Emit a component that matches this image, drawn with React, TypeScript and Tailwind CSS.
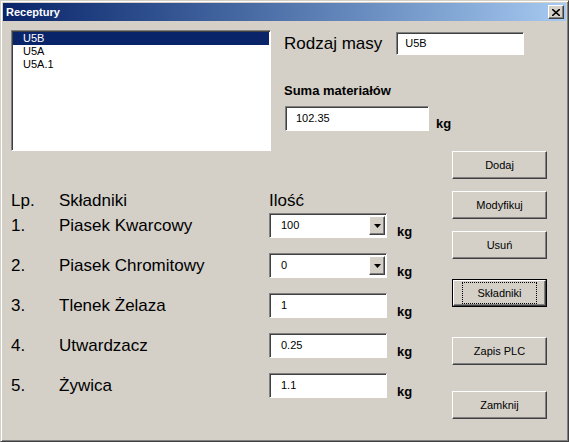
import React from "react";

const sunken = "bg-white border border-t-[#808080] border-l-[#808080] border-b-white border-r-white shadow-[inset_1px_1px_0_#404040]";
const raised = "bg-[#d4d0c8] border border-t-white border-l-white border-b-[#404040] border-r-[#404040] shadow-[inset_-1px_-1px_0_#808080]";

function Btn({ label, mt, focus }: { label: string; mt: string; focus?: boolean }) {
  return (
    <div className={`${mt} w-[95px] h-[28px] ${focus ? "border border-black" : ""}`}>
      <div className={`${raised} w-full h-full flex items-center justify-center text-[11px] text-black`}>
        <span className={focus ? "outline-1 outline-dotted outline-black px-[14px] py-[2px]" : ""}>{label}</span>
      </div>
    </div>
  );
}

function Row({ n, name, val, combo }: { n: string; name: string; val: string; combo?: boolean }) {
  return (
    <div className="flex h-[40px]">
      <div className="w-[48px] pt-[8px] text-[17px]">{n}</div>
      <div className="w-[210px] pt-[8px] text-[17px]">{name}</div>
      <div className={`${sunken} mt-[8px] w-[118px] h-[25px] flex items-center`}>
        <span className="flex-1 pl-[11px] text-[11px]">{val}</span>
        {combo && (
          <div className={`${raised} w-[16px] h-[19px] mr-[1px] flex items-center justify-center`}>
            <svg width="7" height="4" viewBox="0 0 7 4"><path d="M0 0h7L3.5 4z" fill="black" /></svg>
          </div>
        )}
      </div>
      <div className="ml-[10px] pt-[17px] text-[13px] font-bold">kg</div>
    </div>
  );
}

export default function App() {
  return (
    <div className="w-[569px] h-[442px] bg-[#d4d0c8] border border-t-[#d4d0c8] border-l-[#d4d0c8] border-b-[#404040] border-r-[#404040] shadow-[inset_1px_1px_0_white,inset_-1px_-1px_0_#808080] p-[2px] text-black" style={{ fontFamily: '"Liberation Sans", Arial, sans-serif' }}>
      <div className="h-[18px] bg-gradient-to-r from-[#0a246a] to-[#a6caf0] flex items-center justify-between pl-[3px] pr-[2px]">
        <span className="text-white font-bold text-[11px]">Receptury</span>
        <div className={`${raised} w-[16px] h-[14px] flex items-center justify-center`}>
          <svg width="8" height="7" viewBox="0 0 8 7"><path d="M0 0L8 7M8 0L0 7" stroke="black" strokeWidth="1.6" /></svg>
        </div>
      </div>
      <div className="flex mt-[9px] pl-[8px]">
        <div className={`${sunken} w-[260px] h-[121px] p-[1px] text-[11px]`}>
          <div className="bg-[#0a246a] text-white pl-[10px] h-[13px] leading-[13px]">U5B</div>
          <div className="pl-[10px] leading-[13px]">U5A</div>
          <div className="pl-[10px] leading-[13px]">U5A.1</div>
        </div>
        <div className="ml-[13px]">
          <div className="flex items-center">
            <span className="text-[17px] mt-[1px]">Rodzaj masy</span>
            <div className={`${sunken} ml-[14px] w-[128px] h-[23px] flex items-center pl-[8px] text-[11px]`}>U5B</div>
          </div>
          <div className="mt-[24px] text-[13px] font-bold">Suma materiałów</div>
          <div className="flex mt-[6px]">
            <div className={`${sunken} ml-[1px] w-[144px] h-[25px] flex items-center pl-[10px] text-[11px]`}>102.35</div>
            <span className="ml-[7px] pt-[8px] text-[13px] font-bold">kg</span>
          </div>
        </div>
      </div>
      <div className="flex">
        <div className="w-[440px] pl-[8px]">
          <div className="flex mt-[41px] h-[18px] text-[17px] leading-[18px]">
            <div className="w-[48px]">Lp.</div>
            <div className="w-[210px]">Składniki</div>
            <div>Ilość</div>
          </div>
          <div className="-mt-[5px]">
            <Row n="1." name="Piasek Kwarcowy" val="100" combo />
            <Row n="2." name="Piasek Chromitowy" val="0" combo />
            <Row n="3." name="Tlenek Żelaza" val="1" />
            <Row n="4." name="Utwardzacz" val="0.25" />
            <Row n="5." name="Żywica" val="1.1" />
          </div>
        </div>
        <div className="ml-[9px] flex flex-col">
          <Btn label="Dodaj" mt="mt-0" />
          <Btn label="Modyfikuj" mt="mt-[12px]" />
          <Btn label="Usuń" mt="mt-[12px]" />
          <Btn label="Składniki" mt="mt-[20px]" focus />
          <Btn label="Zapis PLC" mt="mt-[30px]" />
          <Btn label="Zamknij" mt="mt-[26px]" />
        </div>
      </div>
    </div>
  );
}
